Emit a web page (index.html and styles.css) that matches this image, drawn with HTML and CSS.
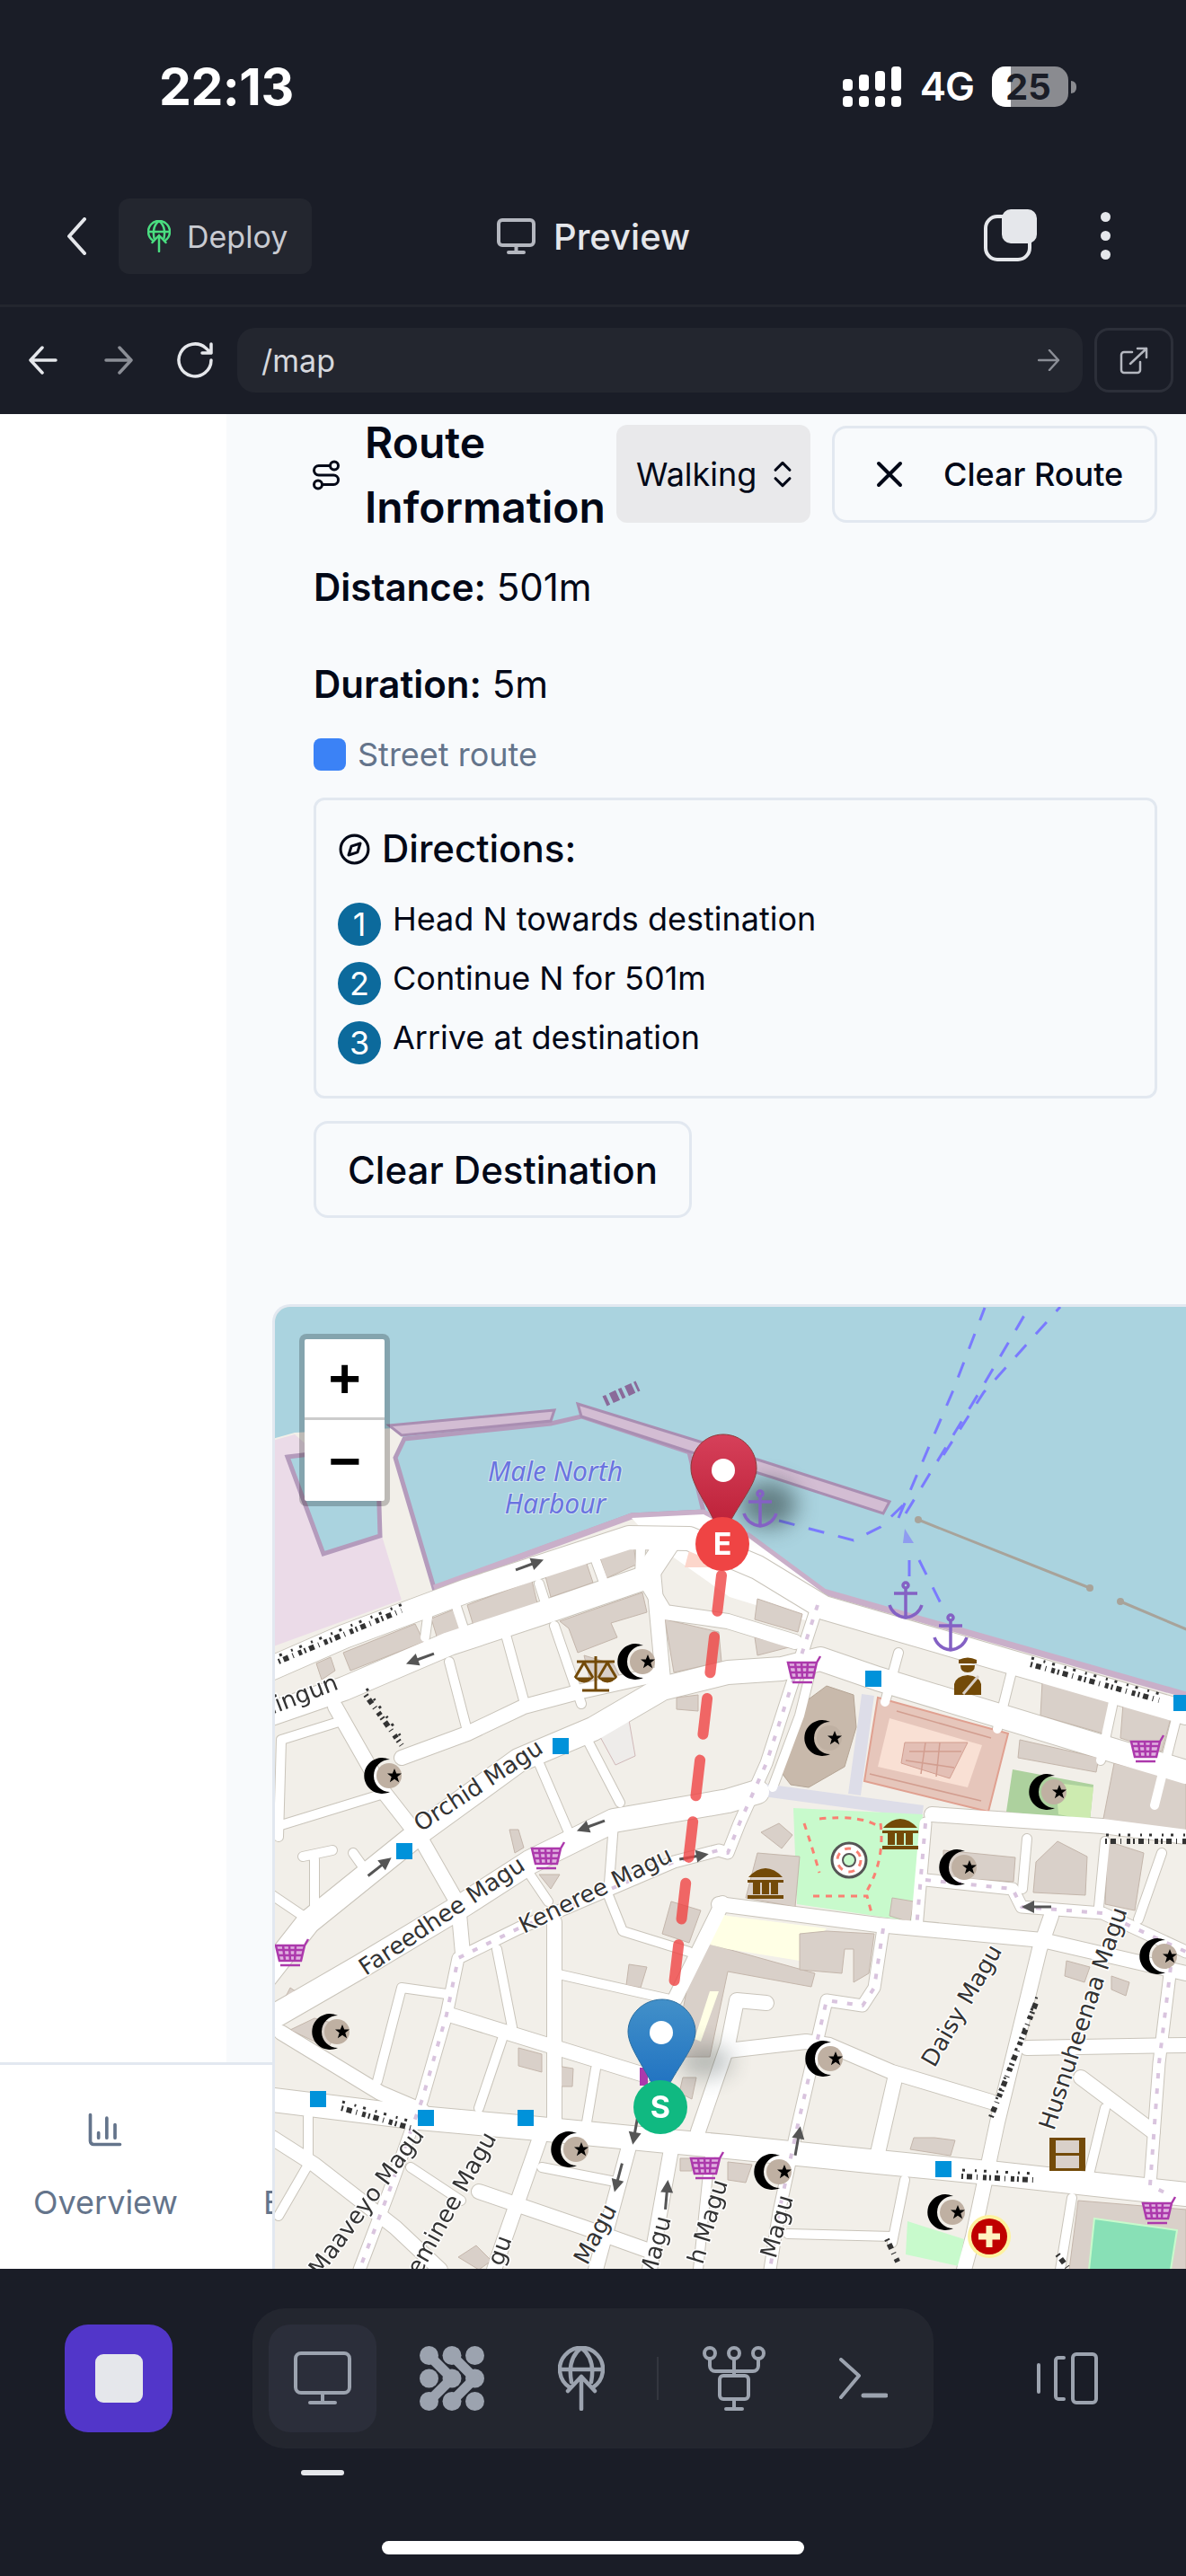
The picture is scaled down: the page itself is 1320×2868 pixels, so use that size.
FILE: index.html
```html
<!DOCTYPE html>
<html lang="en">
<head>
    <meta charset="UTF-8">
    <meta name="viewport" content="width=device-width, initial-scale=1.0">
    <title>Route map preview</title>
    <link rel="stylesheet" href="styles.css">
</head>
<body>

    <!-- Phone status bar -->
    <div class="status-bar">
        <div class="status-time">22:13</div>
        <div class="status-right">
            <svg class="signal" width="65" height="45" viewBox="0 0 65 45">
                <rect x="0" y="14" width="11" height="13" rx="4"/>
                <rect x="18" y="9" width="11" height="18" rx="4"/>
                <rect x="36" y="5" width="11" height="22" rx="4"/>
                <rect x="54" y="0" width="11" height="27" rx="4"/>
                <rect x="0" y="33" width="11" height="12" rx="4"/>
                <rect x="18" y="33" width="11" height="12" rx="4"/>
                <rect x="36" y="33" width="11" height="12" rx="4"/>
                <rect x="54" y="33" width="11" height="12" rx="4"/>
            </svg>
            <div class="status-net">4G</div>
            <div class="battery">
                <div class="battery-fill"></div>
                <div class="battery-text">25</div>
            </div>
            <div class="battery-nub"></div>
        </div>
    </div>

    <!-- Editor top bar -->
    <div class="top-bar">
        <svg class="back-chevron" width="22" height="42" viewBox="0 0 22 42"><path d="M20 2 L3 21 L20 40"/></svg>
        <div class="deploy-pill">
            <svg class="deploy-icon" width="26" height="36" viewBox="0 0 52 72"><use href="#globe-up"/></svg>
            <span>Deploy</span>
        </div>
        <div class="preview-title">
            <svg class="preview-icon" width="43" height="40" viewBox="0 0 43 40">
                <rect x="2" y="2" width="39" height="28" rx="4"/>
                <path d="M21.5 30v7M13 38h17"/>
            </svg>
            <span>Preview</span>
        </div>
        <svg class="copy-icon" width="59" height="58" viewBox="0 0 59 58">
            <rect class="copy-back" x="2" y="8" width="49" height="48" rx="13"/>
            <rect class="copy-front" x="20" y="0" width="39" height="38" rx="10"/>
        </svg>
        <div class="kebab"><i></i><i></i><i></i></div>
    </div>

    <!-- Preview url bar -->
    <div class="url-bar">
        <svg class="url-arrow" width="32" height="32" viewBox="0 0 32 32"><path d="M30 16H3M15 2 2 16l13 14"/></svg>
        <svg class="url-arrow url-arrow-dim" width="32" height="32" viewBox="0 0 32 32"><path d="M2 16h27M17 2l13 14-13 14"/></svg>
        <svg class="url-reload" width="44" height="40" viewBox="0 0 44 40"><path d="M40 20a18 18 0 1 1-6-13.5L40 12M40 2v10H30"/></svg>
        <div class="url-input">
            <span>/map</span>
            <svg class="url-go" width="25" height="24" viewBox="0 0 25 24"><path d="M1 12h22M13 1l10 11-10 11"/></svg>
        </div>
        <div class="url-open">
            <svg width="32" height="31" viewBox="0 0 32 31"><path d="M14 6H5a3 3 0 0 0-3 3v17a3 3 0 0 0 3 3h15a3 3 0 0 0 3-3v-9M12 19 30 2M20 2h10v10"/></svg>
        </div>
    </div>

    <div class="main">
        <div class="side"></div>

        <div class="content">
            <div class="route-head">
                <svg class="lucide route-icon" width="36" height="36" viewBox="0 0 24 24">
                    <circle cx="6" cy="19" r="3"/>
                    <path d="M9 19h8.5a3.5 3.5 0 0 0 0-7h-11a3.5 3.5 0 0 1 0-7H15"/>
                    <circle cx="18" cy="5" r="3"/>
                </svg>
                <h2 class="route-title">Route Information</h2>
                <div class="mode-select">
                    <span>Walking</span>
                    <svg class="lucide" width="38" height="38" viewBox="0 0 24 24"><path d="m7 15 5 5 5-5M7 9l5-5 5 5"/></svg>
                </div>
                <button class="btn btn-clear-route">
                    <svg class="lucide" width="48" height="48" viewBox="0 0 24 24"><path d="M18 6 6 18M6 6l12 12"/></svg>
                    <span>Clear Route</span>
                </button>
            </div>

            <p class="stat stat-first"><b>Distance:</b> 501m</p>
            <p class="stat"><b>Duration:</b> 5m</p>

            <div class="legend">
                <span class="legend-dot"></span>
                <span>Street route</span>
            </div>

            <div class="directions">
                <h3 class="directions-title">
                    <svg class="lucide" width="37" height="37" viewBox="0 0 24 24">
                        <circle cx="12" cy="12" r="10"/>
                        <path d="m16.2 7.8-2 6.4-6.4 2 2-6.4z"/>
                    </svg>
                    <span>Directions:</span>
                </h3>
                <div class="step"><span class="step-num">1</span><span>Head N towards destination</span></div>
                <div class="step"><span class="step-num">2</span><span>Continue N for 501m</span></div>
                <div class="step"><span class="step-num">3</span><span>Arrive at destination</span></div>
            </div>

            <button class="btn btn-clear-dest">Clear Destination</button>

            <!-- Map -->
            <div class="map">
                <svg class="map-svg" width="1014" height="1071" viewBox="306 1455 1014 1071">
                    <defs>
                        <g id="rd-wide">
                            <path d="M296 1860 383 1822 520 1771 700 1712 767 1713 843 1745 917 1790 1320 1907"/>
                            <path d="M296 1910 383 1880 500 1830 600 1797 717 1757 745 1715"/>
                            <path d="M296 2200 343 2140 467 2040 577 1960 660 1925 737 1880 810 1862 870 1858 913 1847 977 1869 1243 1950 1320 1973"/>
                            <path d="M296 2250 400 2190 517 2120 590 2073 683 2027 810 2005 843 1995"/>
                            <path d="M296 2337 467 2358 600 2370 733 2383 810 2390 977 2407 1110 2420 1320 2443"/>
                        </g>
                        <g id="rd-mid">
                            <path d="M800 2120 977 2143 1160 2160 1320 2197"/>
                            <path d="M717 1757 740 1795 810 1805 885 1828"/>
                            <path d="M727 1750 738 1870"/>
                            <path d="M447 1957 520 1930 583 1900 647 1883 737 1863"/>
                            <path d="M373 1900 427 1995 470 2050 510 2120 515 2175"/>
                            <path d="M804 2119 751 2226"/>
                            <path d="M853 2230 820 2227 810 2277 777 2373"/>
                            <path d="M810 2283 897 2273 923 2277 993 2307 1103 2340"/>
                            <path d="M1143 2280 1320 2277"/>
                            <path d="M1170 2133 1157 2170 1110 2363 1083 2490 1073 2527"/>
                            <path d="M997 2310 977 2397"/>
                            <path d="M500 2243 717 2310"/>
                            <path d="M303 2380 350 2410 440 2480 490 2527"/>
                            <path d="M533 2440 650 2480 720 2505"/>
                            <path d="M600 2383 560 2497 550 2527"/>
                            <path d="M700 2390 663 2527"/>
                            <path d="M747 2393 723 2527"/>
                            <path d="M1037 2020 1227 2033 1320 2045"/>
                            <path d="M1203 2313 1283 2373"/>
                            <path d="M313 2263 423 2330 470 2350"/>
                            <path d="M617 2140 617 2363"/>
                        </g>
                        <g id="rd-thin">
                            <path d="M477 1793 473 1823"/>
                            <path d="M505 1780 520 1825M600 1763 612 1800M663 1737 675 1770M713 1723 712 1760"/>
                            <path d="M500 1850 520 1927M563 1820 583 1893M617 1810 647 1897"/>
                            <path d="M593 1947 633 2040M650 1930 690 2007"/>
                            <path d="M683 2030 677 2110 693 2150 767 2173"/>
                            <path d="M310 2045 313 1937 377 1917"/>
                            <path d="M303 2035 427 1997"/>
                            <path d="M337 2067 370 2060M350 2070 350 2123M393 2063 403 2077M303 2110 343 2137"/>
                            <path d="M587 2083 610 2117M617 2197 750 2227"/>
                            <path d="M553 2170 570 2257M663 2303 653 2363M560 2267 533 2347"/>
                            <path d="M497 2220 447 2213 420 2317"/>
                            <path d="M343 2357 343 2410 310 2467M457 2413 513 2450M603 2413 690 2430"/>
                            <path d="M777 2527 790 2400"/>
                            <path d="M1007 2427 993 2497M1230 2347 1213 2417M877 2487 993 2490"/>
                            <path d="M1193 2447 1180 2527M1293 2063 1267 2137M1230 2050 1223 2123M1143 2047 1138 2103"/>
                            <path d="M1000 1840 985 1895M1130 1845 1110 1925M1240 1890 1225 1960M1310 1910 1285 2010"/>
                            <path d="M905 1850 890 1910 860 1990"/>
                        </g>
                        <g id="rd-foot">
                            <path d="M910 1787 853 1963 823 2030 810 2063 800 2060 750 2073 577 2147 510 2180 497 2243 470 2337 433 2440 400 2527"/>
                            <path d="M983 2147 973 2213 960 2233 920 2227 910 2270 887 2370 867 2463 857 2527"/>
                            <path d="M1030 2030 1020 2147"/>
                            <path d="M1030 2093 1127 2103 1137 2123 1227 2130 1320 2173"/>
                            <path d="M1303 2190 1290 2297 1280 2433 1300 2443"/>
                        </g>

                        <g id="crescent">
                            <circle class="ic-tan" cx="8" cy="0" r="14"/>
                            <path class="ic-black" d="M9-18A20 20 0 1 0 9 18 18 18 0 0 1 9-18Z"/>
                            <path class="ic-black" d="m14-8 2.200 5.500 5.800 0-4.700 3.700 1.800 6-5.100-3.500-5.100 3.500 1.800-6-4.700-3.700 5.800 0z"/>
                        </g>
                        <g id="square"><rect class="ic-blue" x="-9" y="-9" width="18" height="18"/></g>
                        <g id="cart" class="ic-cart">
                            <path class="ic-cart-fill" d="M-18-9H14L10 8H-14Z"/>
                            <path d="M-18-9H14L10 8H-14ZM-17-4H13M-15 2H11M-10-9-8 8M-3-9-2 8M4-9 3 8M14-9 18-16M-13 13H9"/>
                        </g>
                        <g id="anchor" class="ic-anchor">
                            <circle cx="0" cy="-17" r="3"/>
                            <path d="M0-14V19M-13-8H13M-18 5Q-14 17 0 19 14 17 18 5"/>
                        </g>
                        <g id="museum" class="ic-brown">
                            <path d="M-19-8Q-10-18 0-18 10-18 19-8ZM-20-5H20V-2H-20ZM-14-2H-6V11H-14ZM-4-2H4V11H-4ZM6-2H14V11H6ZM-20 12H20V16H-20Z"/>
                        </g>
                        <g id="arrow" class="ic-arrow">
                            <path class="ic-arrow-line" d="M-17 0H3"/>
                            <path d="M2-7 16 0 2 7Z"/>
                        </g>
                        <linearGradient id="pin-red" x1="0" y1="0" x2="0" y2="1">
                            <stop offset="0" stop-color="#d6405a"/>
                            <stop offset="1" stop-color="#b91c33"/>
                        </linearGradient>
                        <linearGradient id="pin-blue" x1="0" y1="0" x2="0" y2="1">
                            <stop offset="0" stop-color="#4290c9"/>
                            <stop offset="1" stop-color="#1a6dc0"/>
                        </linearGradient>
                    </defs>

                    <g class="map-base">
                        <rect class="m-water" x="296" y="1440" width="1040" height="1100"/>
                        <polygon class="m-land" points="296,1604 328,1595 440,1590 490,1770 703,1688 783,1685 833,1710 917,1772 1320,1887 1320,2540 296,2540"/>
                        <polygon class="m-pink" points="296,1606 328,1597 345,1612 423,1597 450,1780 296,1836"/>
                        <polygon class="m-cream" points="420,1597 450,1592 442,1625 485,1770 447,1782 425,1710"/>
                        <polygon class="m-water m-shore" points="320,1622 420,1610 423,1710 360,1730"/>
                        <polygon class="m-water m-shore" points="450,1602 613,1585 647,1577 767,1617 783,1683 703,1687 483,1768 440,1623"/>
                        <polygon class="m-pier" points="433,1587 617,1570 613,1582 447,1598"/>
                        <polygon class="m-pier" points="643,1563 843,1625 990,1672 983,1685 860,1645 773,1618 647,1577"/>
                        <polyline class="m-shore-line" points="483,1768 703,1688 783,1684 833,1710 917,1772 1320,1887"/>
                        <polygon class="m-white" points="703,1690 783,1686 833,1712 917,1774 900,1805 812,1778 730,1720"/>

                        <use href="#rd-wide" class="rd-case w-wide"/>
                        <use href="#rd-mid" class="rd-case w-mid"/>
                        <use href="#rd-thin" class="rd-case w-thin"/>
                        <use href="#rd-foot" class="rd-case w-foot"/>

                        <polygon class="m-block" points="382,1840 462,1808 472,1828 390,1860"/>
                        <polygon class="m-block" points="480,1802 505,1792 513,1815 487,1825"/>
                        <polygon class="m-block" points="520,1787 592,1760 598,1785 527,1810"/>
                        <polygon class="m-block" points="607,1755 652,1738 660,1762 613,1778"/>
                        <polygon class="m-block" points="667,1732 705,1718 708,1742 675,1757"/>
                        <polygon class="m-block" points="717,1713 732,1712 727,1742"/>
                        <polygon class="m-block" points="352,1852 368,1845 373,1860 358,1870"/>
                        <polygon class="m-block" points="623,1805 715,1773 720,1795 680,1807 687,1823 643,1840 633,1813"/>
                        <polygon class="m-block" points="650,1843 683,1853 693,1873 660,1885"/>
                        <polygon class="m-block" points="740,1803 800,1817 803,1850 750,1862"/>
                        <polygon class="m-blush" points="770,1715 790,1712 790,1745 762,1745"/>
                        <polygon class="m-pale" points="667,1932 700,1915 707,1955 685,1965"/>
                        <polygon class="m-block" points="753,1890 777,1887 777,1905 753,1903"/>
                        <polygon class="m-block" points="843,1780 893,1797 888,1817 840,1803"/>
                        <polygon class="m-block" points="840,1823 882,1833 843,1843"/>
                        <polygon class="m-mosque" points="920,1877 950,1887 953,1923 940,1967 900,1990 880,1987 867,1970 893,1897"/>
                        <polygon class="m-complex" points="977,1890 1122,1930 1100,2017 962,1983"/>
                        <polygon class="m-complex-in" points="990,1913 1093,1943 1077,1990 977,1967"/>
                        <polygon class="m-complex-bld" points="1007,1940 1077,1940 1057,1980 1003,1963"/>
                        <path class="m-complex-lines" d="M1012 1950H1070M1008 1960 1062 1968M1030 1940 1025 1975M1046 1940 1042 1978M998 1905 1103 1935M968 1975 1092 2005"/>
                        <path class="m-plaza" d="M966 1887 951 1998M850 1993 1027 2017"/>
                        <polygon class="m-block" points="1160,1873 1237,1893 1228,1930 1158,1910"/>
                        <polygon class="m-block" points="1250,1897 1303,1913 1293,1950 1247,1935"/>
                        <polygon class="m-block" points="1135,1937 1223,1957 1220,1973 1133,1957"/>
                        <polygon class="m-grass-dark" points="1127,1970 1217,1987 1213,2027 1120,2017"/>
                        <polygon class="m-grass" points="1175,1985 1217,1990 1213,2027 1178,2020"/>
                        <polygon class="m-block" points="1240,1963 1320,1983 1320,2040 1227,2030"/>
                        <polygon class="m-park" points="883,2013 1027,2020 1020,2140 887,2120"/>
                        <path class="m-red-dash" d="M895 2030Q905 2060 912 2085M905 2111H965L970 2130M980 2030Q985 2070 965 2105M912 2025Q960 2020 980 2035"/>
                        <circle class="m-ring-out" cx="945" cy="2071" r="19"/>
                        <circle class="m-red-dash" cx="945" cy="2071" r="13"/>
                        <circle class="m-ring-in" cx="945" cy="2071" r="7"/>
                        <polygon class="m-block" points="847,2040 867,2030 882,2043 870,2058"/>
                        <polygon class="m-block" points="843,2063 890,2067 885,2123 830,2113"/>
                        <polygon class="m-block" points="993,2113 1017,2117 1013,2140 990,2133"/>
                        <polygon class="m-block" points="775,2160 810,2170 907,2197 903,2212 810,2195 790,2290 750,2290"/>
                        <polygon class="m-yellow" points="810,2133 920,2147 890,2183 810,2170 790,2165 800,2130"/>
                        <polygon class="m-yellow" points="790,2217 800,2217 780,2273 773,2270"/>
                        <polygon class="m-block" points="890,2153 920,2150 973,2153 967,2197 950,2207 950,2170 940,2170 937,2197 890,2193"/>
                        <polygon class="m-block" points="1050,2060 1130,2068 1128,2095 1050,2090"/>
                        <polygon class="m-block" points="1153,2073 1177,2050 1210,2067 1208,2110 1150,2107"/>
                        <polygon class="m-block" points="1233,2050 1273,2063 1263,2127 1230,2120"/>
                        <polygon class="m-block" points="1187,2183 1213,2190 1207,2207 1185,2200"/>
                        <polygon class="m-block" points="1237,2200 1257,2207 1253,2222 1237,2215"/>
                        <polygon class="m-block" points="1013,2393 1017,2380 1040,2380 1063,2383 1058,2400"/>
                        <polygon class="m-block" points="810,2407 837,2410 830,2430 810,2427"/>
                        <polygon class="m-park" points="1010,2473 1073,2493 1067,2523 1008,2510"/>
                        <polygon class="m-block" points="1200,2450 1320,2460 1320,2527 1190,2527"/>
                        <polygon class="m-pitch" points="1218,2470 1310,2483 1303,2527 1212,2527"/>
                        <polygon class="m-block" points="567,2037 577,2037 583,2057 573,2063"/>
                        <polygon class="m-block" points="600,2087 623,2087 613,2103"/>
                        <polygon class="m-block" points="747,2117 780,2127 767,2163 737,2153"/>
                        <polygon class="m-block" points="700,2187 720,2190 713,2213 697,2210"/>
                        <polygon class="m-block" points="577,2280 603,2287 603,2307 577,2300"/>
                        <polygon class="m-block" points="620,2300 638,2303 637,2323 620,2323"/>
                        <polygon class="m-block" points="323,2260 350,2247 380,2255 365,2280"/>
                        <polygon class="m-block" points="313,2233 323,2213 333,2220"/>
                        <polygon class="m-block" points="510,2513 530,2500 547,2517 533,2527"/>
                        <polygon class="m-block" points="757,2403 770,2403 770,2417 757,2417"/>
                        <polygon class="m-block" points="760,2313 775,2313 770,2337 756,2330"/>

                        <use href="#rd-wide" class="rd-fill w-wide-in"/>
                        <use href="#rd-mid" class="rd-fill w-mid-in"/>
                        <use href="#rd-thin" class="rd-fill w-thin-in"/>
                        <use href="#rd-foot" class="rd-fill w-foot-in"/>
                        <use href="#rd-foot" class="rd-dots"/>

                        <!-- Thaana street names, no font here carries that script -->
                        <path class="m-scribble" d="M310 1850 447 1793M407 1887 447 1943M1147 1853 1290 1893M380 2347 460 2370M1070 2423 1150 2427M1103 2357 1153 2230M1230 2050 1320 2050M987 2493 1000 2520M1177 2510 1190 2527"/>
                        <path class="m-scribble m-scribble-top" d="M310 1850 447 1793M407 1887 447 1943M1147 1853 1290 1893M380 2347 460 2370M1070 2423 1150 2427M1103 2357 1153 2230M1230 2050 1320 2050"/>
                        <path class="m-scribble m-scribble-harbour" d="M673 1560 710 1543"/>
                        <path class="m-route-water" d="M1000 1690 1060 1550 1096 1456M1008 1685 1090 1550 1145 1456M1050 1620 1095 1550 1180 1455M867 1693 950 1715 980 1700 1006 1675M1012 1737V1757M1023 1737 1047 1785"/>
                        <polygon class="m-tri" points="1007,1702 1017,1718 1005,1718"/>
                        <path class="m-cable" d="M1022 1692 1213 1768M1247 1783 1330 1818"/>
                        <circle class="m-cable-dot" cx="1022" cy="1692" r="4"/>
                        <circle class="m-cable-dot" cx="1213" cy="1768" r="4"/>
                        <circle class="m-cable-dot" cx="1247" cy="1783" r="4"/>

                        <text class="m-harbour" x="618" y="1649">Male North</text>
                        <text class="m-harbour" x="618" y="1685">Harbour</text>
                        <text class="m-label" x="468" y="2040" transform="rotate(-33 468 2040)">Orchid Magu</text>
                        <text class="m-label" x="407" y="2200" transform="rotate(-33.700 407 2200)">Fareedhee Magu</text>
                        <text class="m-label" x="583" y="2153" transform="rotate(-26 583 2153)">Keneree Magu</text>
                        <text class="m-label" x="1040" y="2303" transform="rotate(-60 1040 2303)">Daisy Magu</text>
                        <text class="m-label" x="1173" y="2373" transform="rotate(-71.600 1173 2373)">Husnuheenaa Magu</text>
                        <text class="m-label m-end" x="473" y="2377" transform="rotate(-53.700 473 2377)">Maaveyo Magu</text>
                        <text class="m-label m-end" x="553" y="2380" transform="rotate(-61 553 2380)">eminee Magu</text>
                        <text class="m-label m-end" x="570" y="2493" transform="rotate(-70 570 2493)">gu</text>
                        <text class="m-label m-end" x="687" y="2460" transform="rotate(-62 687 2460)">Magu</text>
                        <text class="m-label m-end" x="747" y="2470" transform="rotate(-75 747 2470)">Magu</text>
                        <text class="m-label m-end" x="810" y="2430" transform="rotate(-73 810 2430)">h Magu</text>
                        <text class="m-label m-end" x="883" y="2447" transform="rotate(-74 883 2447)">Magu</text>
                        <text class="m-label m-end" x="378" y="1880" transform="rotate(-21 378 1880)">lingun</text>

                        <use href="#crescent" x="707" y="1850"/>
                        <use href="#crescent" x="425" y="1977"/>
                        <use href="#crescent" x="915" y="1935"/>
                        <use href="#crescent" x="1165" y="1995"/>
                        <use href="#crescent" x="1065" y="2079"/>
                        <use href="#crescent" x="1288" y="2178"/>
                        <use href="#crescent" x="916" y="2292"/>
                        <use href="#crescent" x="859" y="2418"/>
                        <use href="#crescent" x="1052" y="2463"/>
                        <use href="#crescent" x="367" y="2262"/>
                        <use href="#crescent" x="633" y="2393"/>

                        <use href="#cart" x="895" y="1860"/>
                        <use href="#cart" x="1277" y="1948"/>
                        <use href="#cart" x="610" y="2067"/>
                        <use href="#cart" x="325" y="2175"/>
                        <use href="#cart" x="787" y="2412"/>
                        <use href="#cart" x="1290" y="2462"/>

                        <use href="#square" x="624" y="1944"/>
                        <use href="#square" x="972" y="1869"/>
                        <use href="#square" x="1315" y="1896"/>
                        <use href="#square" x="450" y="2061"/>
                        <use href="#square" x="354" y="2337"/>
                        <use href="#square" x="474" y="2358"/>
                        <use href="#square" x="585" y="2358"/>
                        <use href="#square" x="1050" y="2415"/>

                        <use href="#anchor" x="1008" y="1782"/>
                        <use href="#anchor" x="1058" y="1818"/>
                        <use href="#museum" x="1002" y="2043"/>
                        <use href="#museum" x="852" y="2098"/>

                        <!-- Scales -->
                        <g class="ic-scale">
                            <path d="M663 1844V1882M642 1850H684M648 1882H678M650 1851 640 1868M650 1851 660 1868M676 1851 666 1868M676 1851 686 1868"/>
                            <path class="ic-scale-pan" d="M640 1868Q650 1878 660 1868ZM666 1868Q676 1878 686 1868Z"/>
                        </g>
                        <!-- Police -->
                        <g class="ic-brown">
                            <path d="M1067 1848Q1077 1843 1087 1848V1852H1067ZM1069 1854H1085Q1085 1862 1077 1862 1069 1862 1069 1854ZM1062 1887V1875Q1064 1866 1077 1865 1090 1866 1092 1875V1887Z"/>
                        </g>
                        <path class="ic-police-strap" d="M1089 1866 1072 1886"/>
                        <!-- Cinema -->
                        <rect class="ic-film" x="1168" y="2380" width="40" height="37"/>
                        <rect class="ic-film-pane" x="1175" y="2383" width="26" height="14"/>
                        <rect class="ic-film-pane" x="1175" y="2400" width="26" height="14"/>
                        <!-- Hospital -->
                        <circle class="ic-hosp-halo" cx="1101" cy="2490" r="24"/>
                        <circle class="ic-hosp" cx="1101" cy="2490" r="20"/>
                        <path class="ic-hosp-cross" d="M1101 2478V2502M1089 2490H1113"/>

                        <use href="#arrow" transform="translate(590 1742) rotate(-20)"/>
                        <use href="#arrow" transform="translate(467 1847) rotate(160)"/>
                        <use href="#arrow" transform="translate(657 2033) rotate(160)"/>
                        <use href="#arrow" transform="translate(423 2078) rotate(-38)"/>
                        <use href="#arrow" transform="translate(773 2067) rotate(-10)"/>
                        <use href="#arrow" transform="translate(1153 2123) rotate(180)"/>
                        <use href="#arrow" transform="translate(707 2372) rotate(100)"/>
                        <use href="#arrow" transform="translate(688 2425) rotate(105)"/>
                        <use href="#arrow" transform="translate(742 2443) rotate(-85)"/>
                        <use href="#arrow" transform="translate(888 2383) rotate(-80)"/>
                    </g>

                    <!-- Route and markers -->
                    <ellipse class="pin-shadow" cx="855" cy="1675" rx="32" ry="26"/>
                    <use href="#anchor" class="ic-anchor-dark" x="846" y="1680"/>
                    <ellipse class="pin-shadow pin-shadow-light" cx="785" cy="2295" rx="30" ry="18"/>
                    <rect class="poi-bar" x="712" y="2302" width="9" height="20"/>
                    <path class="route-line" d="M803 1754 750 2210"/>
                    <path class="pin-red" d="M805 1597C785 1597 769 1613 769 1635 769 1655 793 1680 803 1715 816 1680 842 1655 842 1635 842 1613 825 1597 805 1597Z"/>
                    <ellipse class="pin-hole" cx="805" cy="1637" rx="13" ry="13"/>
                    <path class="pin-blue" d="M737 2226C716 2226 699 2243 699 2262 699 2282 723 2307 735 2342 748 2307 774 2282 774 2262 774 2243 757 2226 737 2226Z"/>
                    <ellipse class="pin-hole" cx="736" cy="2263" rx="13" ry="13"/>
                    <circle class="pin-end" cx="804" cy="1719" r="30"/>
                    <text class="pin-letter" x="804" y="1731">E</text>
                    <circle class="pin-start" cx="735" cy="2346" r="30"/>
                    <text class="pin-letter" x="735" y="2358">S</text>
                </svg>

                <div class="zoom-control">
                    <div class="zoom-btn zoom-in">+</div>
                    <div class="zoom-btn">&minus;</div>
                </div>
            </div>
        </div>

        <!-- Page tabs, the map lies over them -->
        <div class="tab-bar">
            <div class="tab">
                <svg class="lucide tab-icon" width="44" height="44" viewBox="0 0 24 24"><path d="M3 3v16a2 2 0 0 0 2 2h16M8 17v-3M13 17V5M18 17V9"/></svg>
                <span>Overview</span>
            </div>
            <div class="tab tab-next">
                <span>E</span>
            </div>
        </div>
    </div>

    <!-- Editor dock -->
    <div class="dock">
        <div class="dock-row">
            <div class="stop-btn"><i></i></div>
            <div class="dock-group">
                <div class="dock-item dock-item-active">
                    <svg class="dock-icon" width="64" height="60" viewBox="0 0 64 60">
                        <rect x="2" y="2" width="60" height="44" rx="6"/>
                        <path d="M32 46v11M18 57h28"/>
                    </svg>
                </div>
                <div class="dock-item">
                    <svg class="dock-fill" width="72" height="72" viewBox="0 0 72 72">
                        <circle cx="10.500" cy="10.500" r="10.500"/><circle cx="36" cy="10.500" r="10.500"/><circle cx="61.500" cy="10.500" r="10.500"/>
                        <circle cx="10.500" cy="36" r="10.500"/><circle cx="36" cy="36" r="10.500"/><circle cx="61.500" cy="36" r="10.500"/>
                        <circle cx="10.500" cy="61.500" r="10.500"/><circle cx="36" cy="61.500" r="10.500"/><circle cx="61.500" cy="61.500" r="10.500"/>
                        <path class="dock-link" d="M10.500 10.500 36 36 10.500 61.500M36 10.500 61.500 36 36 61.500"/>
                    </svg>
                </div>
                <div class="dock-item">
                    <svg class="dock-icon dock-icon-globe" width="52" height="72" viewBox="0 0 52 72"><use href="#globe-up"/></svg>
                </div>
                <div class="dock-sep"></div>
                <div class="dock-item">
                    <svg class="dock-icon" width="70" height="72" viewBox="0 0 70 72">
                        <circle cx="8" cy="8" r="6"/><circle cx="35" cy="8" r="6"/><circle cx="62" cy="8" r="6"/>
                        <path d="M8 14v8a6 6 0 0 0 6 6h42a6 6 0 0 0 6-6v-8M35 14v19"/>
                        <rect x="19" y="33" width="32" height="26" rx="4"/>
                        <path d="M35 59v10M26 70h18"/>
                    </svg>
                </div>
                <div class="dock-item">
                    <svg class="dock-icon" width="54" height="46" viewBox="0 0 54 46">
                        <path d="M2 2 22 20 2 44"/>
                        <path class="dock-prompt" d="M27 42H52"/>
                    </svg>
                </div>
            </div>
            <svg class="dock-icon dock-device" width="68" height="58" viewBox="0 0 68 58">
                <rect x="40" y="2" width="26" height="54" rx="4"/>
                <path d="M30 6h-6a3 3 0 0 0-3 3v40a3 3 0 0 0 3 3h6M2 14v30"/>
            </svg>
        </div>
        <div class="dock-mark"></div>
        <div class="home-bar"></div>
    </div>

    <!-- Shared globe icon, used by deploy and by the dock -->
    <svg class="svg-sprites" width="0" height="0">
        <defs>
            <g id="globe-up">
                <path d="M13 46A24 24 0 1 1 39 46"/>
                <path d="M2 26H50M26 2Q10 14 15 40M26 2Q42 14 37 40"/>
                <path d="M26 70V34M11 50 26 34 41 50"/>
            </g>
        </defs>
    </svg>

</body>
</html>
```

FILE: styles.css
```css
* {
    box-sizing: border-box;
}

body {
    margin: 0;
    width: 1320px;
    height: 2868px;
    overflow: hidden;
    background-color: #1a1d27;
    font-family: Inter, "Liberation Sans", sans-serif;
    color: #020817;
}

/* Status bar */
.status-bar {
    height: 221px;
    display: flex;
    justify-content: space-between;
    padding: 74px 122px 0 177px;
    color: #fff;
}

.status-time {
    font-size: 57px;
    font-weight: 700;
    line-height: 46px;
    letter-spacing: -0.5px;
}

.status-right {
    display: flex;
    align-items: flex-start;
    height: 45px;
}

.signal {
    fill: #fff;
}

.status-net {
    margin-left: 21px;
    font-size: 44px;
    font-weight: 600;
    line-height: 45px;
    letter-spacing: -1px;
}

.battery {
    position: relative;
    width: 85px;
    height: 45px;
    margin-left: 20px;
    border-radius: 15px;
    background-color: #8a8b90;
}

.battery-fill {
    width: 21px;
    height: 100%;
    border-radius: 15px 0 0 15px;
    background-color: #fff;
}

.battery-text {
    position: absolute;
    top: 0;
    left: 15px;
    font-size: 40px;
    font-weight: 700;
    line-height: 45px;
    color: #1a1d27;
}

.battery-nub {
    width: 6px;
    height: 14px;
    margin: 16px 0 0 3px;
    border-radius: 0 6px 6px 0;
    background-color: #8a8b90;
}

/* Top bar */
.top-bar {
    height: 121px;
    display: flex;
    align-items: flex-start;
    padding-left: 74px;
    border-bottom: 3px solid #23262f;
    color: #e5e7eb;
}

.back-chevron {
    margin-top: 21px;
    fill: none;
    stroke: #e5e7eb;
    stroke-width: 4;
    stroke-linecap: round;
    stroke-linejoin: round;
}

.deploy-pill {
    display: flex;
    align-items: center;
    gap: 18px;
    width: 215px;
    height: 84px;
    margin-left: 36px;
    padding-left: 32px;
    border-radius: 12px;
    background-color: #23262f;
    font-size: 34px;
    color: #c9cbd1;
}

.deploy-icon {
    fill: none;
    stroke: #4ade80;
    stroke-width: 5;
    stroke-linecap: round;
}

.preview-title {
    display: flex;
    align-items: center;
    gap: 20px;
    height: 40px;
    margin: 22px 0 0 206px;
    font-size: 40px;
    font-weight: 500;
}

.preview-icon {
    fill: none;
    stroke: #b4b7bf;
    stroke-width: 4;
    stroke-linecap: round;
}

.copy-icon {
    margin: 12px 0 0 327px;
}

.copy-back {
    fill: none;
    stroke: #e5e7eb;
    stroke-width: 4;
}

.copy-front {
    fill: #e5e7eb;
}

.kebab {
    display: flex;
    flex-direction: column;
    gap: 10px;
    margin: 15px 0 0 71px;
}

.kebab i {
    width: 11px;
    height: 11px;
    border-radius: 50%;
    background-color: #e5e7eb;
}

/* Url bar */
.url-bar {
    height: 119px;
    display: flex;
    align-items: center;
    padding: 0 14px 1px 32px;
}

.url-bar svg {
    fill: none;
    stroke: #e5e7eb;
    stroke-width: 3.5;
    stroke-linecap: round;
    stroke-linejoin: round;
}

.url-bar .url-arrow-dim {
    margin-left: 52px;
    stroke: #8b8e96;
}

.url-bar .url-reload {
    margin-left: 47px;
}

.url-input {
    flex: 1;
    height: 72px;
    display: flex;
    align-items: center;
    justify-content: space-between;
    margin-left: 25px;
    padding: 0 25px 0 27px;
    border-radius: 20px;
    background-color: #23262f;
    font-size: 34px;
    color: #d6d8dd;
}

.url-bar .url-go {
    stroke: #8b8e96;
    stroke-width: 2.5;
}

.url-open {
    width: 88px;
    height: 72px;
    display: flex;
    align-items: center;
    justify-content: center;
    margin-left: 13px;
    border: 3px solid #2c2f39;
    border-radius: 16px;
}

.url-bar .url-open svg {
    stroke: #b4b7bf;
    stroke-width: 2.5;
}

/* Main area */
.main {
    position: relative;
    height: 2065px;
    display: flex;
    overflow: hidden;
    background-color: #fff;
}

.side {
    width: 252px;
    flex-shrink: 0;
}

.content {
    flex: 1;
    min-width: 0;
    padding: 0 32px 0 97px;
    background-color: #f8fafc;
}

.lucide {
    flex-shrink: 0;
    fill: none;
    stroke: currentColor;
    stroke-width: 2;
    stroke-linecap: round;
    stroke-linejoin: round;
}

.route-head {
    display: flex;
    align-items: center;
    margin-top: -4px;
}

.route-icon {
    margin-left: -4px;
}

.route-title {
    width: 277px;
    flex-shrink: 0;
    margin: 0 0 0 25px;
    font-size: 48px;
    font-weight: 600;
    line-height: 72px;
}

.mode-select {
    width: 216px;
    height: 109px;
    display: flex;
    align-items: center;
    justify-content: space-between;
    flex-shrink: 0;
    margin: 0 0 3px 3px;
    padding: 0 12px 0 22px;
    border-radius: 12px;
    background-color: #e9e9eb;
    font-size: 36px;
}

.btn {
    height: 108px;
    border: 3px solid #e2e8f0;
    border-radius: 16px;
    background-color: #f8fafc;
    font-family: inherit;
    color: #020817;
}

.btn-clear-route {
    width: 362px;
    flex-shrink: 0;
    display: flex;
    align-items: center;
    margin: 0 0 3px 24px;
    padding: 0 0 0 37px;
    font-size: 36px;
    font-weight: 500;
}

.btn-clear-route span {
    margin-left: 36px;
}

.stat {
    margin: 54px 0 0;
    font-size: 42px;
    line-height: 54px;
}

.stat b {
    font-weight: 600;
}

.stat-first {
    margin-top: 26px;
}

.legend {
    display: flex;
    align-items: center;
    gap: 13px;
    height: 36px;
    margin-top: 33px;
    font-size: 36px;
    color: #64748b;
}

.legend-dot {
    width: 36px;
    height: 36px;
    border-radius: 8px;
    background-color: #3b82f6;
}

.directions {
    height: 335px;
    margin-top: 30px;
    padding: 27px 24px 0;
    border: 3px solid #e2e8f0;
    border-radius: 12px;
}

.directions-title {
    display: flex;
    align-items: center;
    gap: 12px;
    margin: 0 0 27px;
    font-size: 42px;
    font-weight: 500;
    line-height: 54px;
}

.step {
    display: flex;
    align-items: flex-start;
    gap: 13px;
    height: 66px;
    font-size: 36px;
    line-height: 48px;
}

.step-num {
    position: relative;
    top: 6px;
    width: 48px;
    height: 48px;
    flex-shrink: 0;
    border-radius: 50%;
    background-color: #0c6a9c;
    color: #fff;
    text-align: center;
}

.btn-clear-dest {
    display: block;
    width: 421px;
    margin-top: 25px;
    padding: 0;
    font-size: 42px;
    font-weight: 500;
}

/* Map */
.map {
    position: relative;
    z-index: 2;
    width: 1017px;
    height: 1100px;
    margin: 96px 0 0 -46px;
    border: 3px solid #e2e8f0;
    border-right: 0;
    border-bottom: 0;
    border-radius: 20px 0 0 0;
    overflow: hidden;
    background-color: #f2efe9;
}

.map-svg {
    display: block;
}

.map-base {
    filter: blur(0.7px);
}

.m-water { fill: #aad3df; }
.m-shore { stroke: #b49bbc; stroke-width: 5; }
.m-land { fill: #f2efe9; }
.m-pink { fill: #ebdbe8; }
.m-cream { fill: #f2efe9; }
.m-white { fill: #fff; }
.m-pier { fill: #d3bdd3; stroke: #a98eb2; stroke-width: 3; }
.m-shore-line { fill: none; stroke: #c9afc9; stroke-width: 7; }
.m-block { fill: #d9d0c9; stroke: #c4b6ab; stroke-width: 1; }
.m-blush { fill: #fcd6cb; }
.m-pale { fill: #eeecea; stroke: #d0b8b8; stroke-width: 1; }
.m-mosque { fill: #c8b9ab; stroke: #b5a595; stroke-width: 1; }
.m-complex { fill: #e6c6bb; stroke: #e0a090; stroke-width: 2; }
.m-complex-in { fill: #f9e0d4; }
.m-complex-bld { fill: #e3bfb5; stroke: #d29e90; stroke-width: 1; }
.m-complex-lines { fill: none; stroke: #d29e90; stroke-width: 1.5; }
.m-plaza { fill: none; stroke: #dddde8; stroke-width: 14; }
.m-grass-dark { fill: #add19e; }
.m-grass { fill: #cdebb0; }
.m-park { fill: #c8facc; }
.m-pitch { fill: #88e0b6; stroke: #c8facc; stroke-width: 2; }
.m-yellow { fill: #ffffe5; }
.m-red-dash { fill: none; stroke: #fa8072; stroke-width: 3; stroke-dasharray: 7 7; }
.m-ring-out { fill: #fff; stroke: #555; stroke-width: 3; }
.m-ring-in { fill: #c8facc; stroke: #555; stroke-width: 2; }

/* Roads: the same paths are drawn twice, a casing first and white on top */
.rd-case,
.rd-fill,
.rd-dots {
    fill: none;
    stroke-linejoin: round;
    stroke-linecap: round;
}

.rd-case { stroke: #c9c4ba; }
.rd-fill { stroke: #fff; }
.rd-dots { stroke: #d9c4de; stroke-width: 4; stroke-dasharray: 6 11; stroke-linecap: butt; }

.w-wide { stroke-width: 28; }
.w-wide-in { stroke-width: 26; }
.w-mid { stroke-width: 18; }
.w-mid-in { stroke-width: 16; }
.w-thin { stroke-width: 12; }
.w-thin-in { stroke-width: 10; }
.w-foot { stroke-width: 15; }
.w-foot-in { stroke-width: 13; }

.m-scribble {
    fill: none;
    stroke: #333;
    stroke-width: 6;
    stroke-dasharray: 2 4 6 5 1 6 4 3;
}

.m-scribble-top {
    transform: translate(1px, -7px);
    stroke-width: 3;
    stroke-dasharray: 3 11 2 8;
}

.m-scribble-harbour {
    stroke: #8a6a9a;
    stroke-width: 12;
    stroke-dasharray: 4 4 8 3;
}

.m-route-water {
    fill: none;
    stroke: #7a7aff;
    stroke-width: 3;
    stroke-dasharray: 18 16;
}

.m-tri { fill: #8f9cf0; }
.m-cable { fill: none; stroke: #a8a39a; stroke-width: 3; }
.m-cable-dot { fill: #a8a39a; }

.m-harbour {
    font-family: "Noto Sans", sans-serif;
    font-size: 30px;
    font-style: italic;
    fill: #6a74e0;
    stroke: #d5e8ee;
    stroke-width: 2px;
    paint-order: stroke;
    text-anchor: middle;
}

.m-label {
    font-family: "DejaVu Sans", sans-serif;
    font-size: 26px;
    fill: #333;
    stroke: #fff;
    stroke-width: 3px;
    paint-order: stroke;
}

.m-end {
    text-anchor: end;
}

.ic-black { fill: #000; }
.ic-tan { fill: #bfb0a2; }
.ic-blue { fill: #0092da; }
.ic-cart { fill: none; stroke: #ac39ac; stroke-width: 2.5; }
.ic-cart-fill { fill: #e0b0e0; stroke: none; }
.ic-anchor { fill: none; stroke: #8461c4; stroke-width: 3.5; }
.ic-anchor-dark { fill: none; stroke: #6a4ba0; stroke-width: 3.5; }
.ic-brown { fill: #734a08; }
.ic-arrow { fill: #555; }
.ic-arrow-line { fill: none; stroke: #555; stroke-width: 3; }
.ic-scale { fill: none; stroke: #734a08; stroke-width: 3; }
.ic-scale-pan { fill: #734a08; stroke-width: 1; }
.ic-police-strap { fill: none; stroke: #d9d0c9; stroke-width: 3; }
.ic-film { fill: #734a08; }
.ic-film-pane { fill: #d9d0c9; }
.ic-hosp-halo { fill: #fdf2a0; }
.ic-hosp { fill: #c00000; }
.ic-hosp-cross { fill: none; stroke: #fff2c0; stroke-width: 7; }

.pin-shadow {
    fill: #2a3a3a;
    opacity: 0.55;
    filter: blur(12px);
}

.pin-shadow-light {
    opacity: 0.3;
}

.poi-bar { fill: #ac39ac; }

.route-line {
    fill: none;
    stroke: #ef4444;
    stroke-opacity: 0.8;
    stroke-width: 12;
    stroke-linecap: round;
    stroke-dasharray: 40 29;
}

.pin-red {
    fill: url(#pin-red);
    stroke: #8c3a3a;
    stroke-width: 1;
}

.pin-blue {
    fill: url(#pin-blue);
    stroke: #2c6ea0;
    stroke-width: 1;
}

.pin-hole { fill: #fff; }
.pin-end { fill: #ef4444; }
.pin-start { fill: #10b981; }

.pin-letter {
    font-family: Inter, sans-serif;
    font-size: 34px;
    font-weight: 700;
    fill: #fff;
    text-anchor: middle;
}

.zoom-control {
    position: absolute;
    top: 30px;
    left: 27px;
    width: 101px;
    height: 192px;
    border: 6px solid rgba(0, 0, 0, 0.22);
    border-radius: 8px;
    background-clip: padding-box;
    background-color: #fff;
}

.zoom-btn {
    height: 90px;
    display: flex;
    align-items: center;
    justify-content: center;
    font-family: "Liberation Sans", sans-serif;
    font-size: 62px;
    font-weight: 700;
    color: #000;
}

.zoom-in {
    border-bottom: 3px solid #ccc;
}

/* Tabs under the map */
.tab-bar {
    position: absolute;
    left: 0;
    right: 0;
    bottom: 0;
    height: 230px;
    display: flex;
    border-top: 3px solid #e2e8f0;
    background-color: #fff;
    font-size: 36px;
    color: #64748b;
}

.tab {
    display: flex;
    flex-direction: column;
    align-items: center;
    padding: 50px 37px 0;
}

.tab-icon {
    margin-bottom: 37px;
}

.tab-next {
    padding: 131px 0 0 58px;
}

/* Dock */
.dock {
    height: 342px;
    padding: 44px 0 0 72px;
}

.dock-row {
    display: flex;
    align-items: center;
    height: 156px;
}

.stop-btn {
    width: 120px;
    height: 120px;
    display: flex;
    align-items: center;
    justify-content: center;
    border-radius: 26px;
    background-color: #5236c9;
}

.stop-btn i {
    width: 53px;
    height: 54px;
    border-radius: 9px;
    background-color: #e5e7eb;
}

.dock-group {
    width: 758px;
    height: 156px;
    display: flex;
    align-items: center;
    gap: 24px;
    margin-left: 89px;
    padding: 0 18px;
    border-radius: 36px;
    background-color: #23262f;
}

.dock-item {
    width: 120px;
    height: 120px;
    flex-shrink: 0;
    display: flex;
    align-items: center;
    justify-content: center;
    border-radius: 24px;
}

.dock-item-active {
    background-color: #2b2e3a;
}

.dock-icon {
    fill: none;
    stroke: #9ca3af;
    stroke-width: 4;
    stroke-linecap: round;
    stroke-linejoin: round;
}

.dock-icon-globe {
    stroke-width: 4.5;
}

.dock-fill {
    fill: #9ca3af;
}

.dock-link {
    fill: none;
    stroke: #9ca3af;
    stroke-width: 11;
    stroke-linecap: round;
    stroke-linejoin: round;
}

.dock-prompt {
    stroke-width: 5;
}

.dock-sep {
    width: 2px;
    height: 48px;
    flex-shrink: 0;
    background-color: #33363f;
}

.dock-device {
    margin-left: 115px;
}

.dock-mark {
    width: 48px;
    height: 6px;
    margin: 24px 0 0 263px;
    border-radius: 3px;
    background-color: #e5e7eb;
}

.home-bar {
    width: 470px;
    height: 15px;
    margin: 73px 0 0 353px;
    border-radius: 8px;
    background-color: #fff;
}

.svg-sprites {
    position: absolute;
}
```
